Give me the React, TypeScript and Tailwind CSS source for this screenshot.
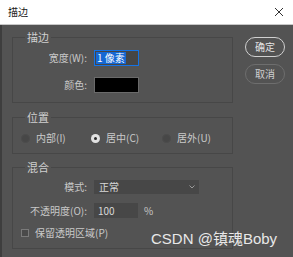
import React from 'react';

const cjk = { fontFamily: '"Noto Sans CJK SC", "Noto Sans", sans-serif' };

const Group: React.FC<{ title: string; className: string; children: React.ReactNode }> = ({ title, className, children }) => (
  <div className={`relative border border-[#474747] ${className}`}>
    <span className="absolute -top-[9px] left-[12px] bg-[#535353] px-[2px] text-[11px] leading-[16px] text-[#d0d0d0]">
      {title}
    </span>
    {children}
  </div>
);

const Radio: React.FC<{ checked?: boolean; label: string }> = ({ checked, label }) => (
  <div className="flex items-center gap-[6px]">
    {checked ? (
      <span className="flex h-[9px] w-[9px] items-center justify-center rounded-full bg-[#e2e2e2]">
        <span className="h-[3px] w-[3px] rounded-full bg-[#2a2a2a]" />
      </span>
    ) : (
      <span className="h-[9px] w-[9px] rounded-full border border-[#4c4c4c] bg-[#474747]" />
    )}
    <span className="text-[10px] leading-[14px] text-[#cacaca]">{label}</span>
  </div>
);

export default function App() {
  return (
    <div className="relative flex h-[257px] w-[293px] flex-col overflow-hidden bg-[#535353]" style={cjk}>
      {/* Title bar */}
      <div className="flex h-[25px] items-center justify-between border-b border-[#c8c8c8] bg-white pl-[8px] pr-[8px]">
        <span className="text-[10px] leading-[12px] text-[#1a1a1a]">描边</span>
        <svg width="10" height="10" viewBox="0 0 10 10" className="mr-[1px]">
          <path d="M1 1 L9 9 M9 1 L1 9" stroke="#333" strokeWidth="1" />
        </svg>
      </div>

      <div className="flex flex-1 border-l-[2px] border-[#3e3e3e]">
        {/* Left column */}
        <div className="ml-[10px] flex w-[221px] flex-col pt-[12px]">
          <Group title="描边" className="h-[66px]">
            <div className="grid grid-cols-[74px_45px] items-center gap-x-[7px] gap-y-[11px] pt-[12px]">
              <span className="text-right text-[10px] leading-[16px] text-[#c8c8c8]">宽度(W):</span>
              <div className="flex h-[16px] items-center border border-[#1473e6] bg-[#464646] pl-[1px]">
                <span className="bg-[#1668d3] px-[1px] text-[10px] leading-[12px] text-white">1 像素</span>
              </div>
              <span className="text-right text-[10px] leading-[16px] text-[#c8c8c8]">颜色:</span>
              <div className="h-[16px] border border-[#6a6a6a] bg-black" />
            </div>
          </Group>

          <Group title="位置" className="mt-[14px] h-[37px]">
            <div className="flex items-center pl-[8px] pt-[13px]">
              <div className="w-[70px]"><Radio label="内部(I)" /></div>
              <div className="w-[71px]"><Radio checked label="居中(C)" /></div>
              <Radio label="居外(U)" />
            </div>
          </Group>

          <Group title="混合" className="mt-[13px] h-[82px]">
            <div className="grid grid-cols-[74px_auto] items-center gap-x-[7px] gap-y-[9px] pt-[12px]">
              <span className="text-right text-[10px] leading-[14px] text-[#c8c8c8]">模式:</span>
              <div className="flex h-[14px] w-[105px] items-center justify-between bg-[#474747] pl-[5px] pr-[4px]">
                <span className="text-[10px] leading-[12px] text-[#d8d8d8]">正常</span>
                <svg width="6" height="4" viewBox="0 0 6 4">
                  <path d="M0.5 0.5 L3 3 L5.5 0.5" stroke="#9a9a9a" strokeWidth="1" fill="none" />
                </svg>
              </div>
              <span className="text-right text-[10px] leading-[15px] text-[#c8c8c8]">不透明度(O):</span>
              <div className="flex items-center gap-[6px]">
                <div className="flex h-[15px] w-[44px] items-center bg-[#474747] pl-[4px]">
                  <span className="text-[10px] leading-[12px] text-[#d8d8d8]">100</span>
                </div>
                <span className="text-[10px] leading-[12px] text-[#c8c8c8]">%</span>
              </div>
            </div>
            <div className="mt-[8px] flex items-center gap-[6px] pl-[8px]">
              <span className="h-[8px] w-[8px] border border-[#7a7a7a] bg-[#4a4a4a]" />
              <span className="text-[10px] leading-[14px] text-[#cacaca]">保留透明区域(P)</span>
            </div>
          </Group>
        </div>

        {/* Buttons */}
        <div className="ml-[12px] flex flex-col gap-[7px] pt-[12px]">
          <button className="h-[20px] w-[40px] rounded-full border border-[#d0d0d0] text-[10px] leading-[12px] text-[#e4e4e4]">
            确定
          </button>
          <button className="h-[20px] w-[40px] rounded-full border border-[#6e6e6e] text-[10px] leading-[12px] text-[#cfcfcf]">
            取消
          </button>
        </div>
      </div>

      {/* Watermark */}
      <span
        className="absolute left-[151px] top-[230px] text-[15px] leading-[18px] text-[#e8e8e8]"
        style={{ fontFamily: '"Liberation Sans", "Noto Sans CJK SC", sans-serif' }}
      >
        CSDN @镇魂Boby
      </span>
    </div>
  );
}
